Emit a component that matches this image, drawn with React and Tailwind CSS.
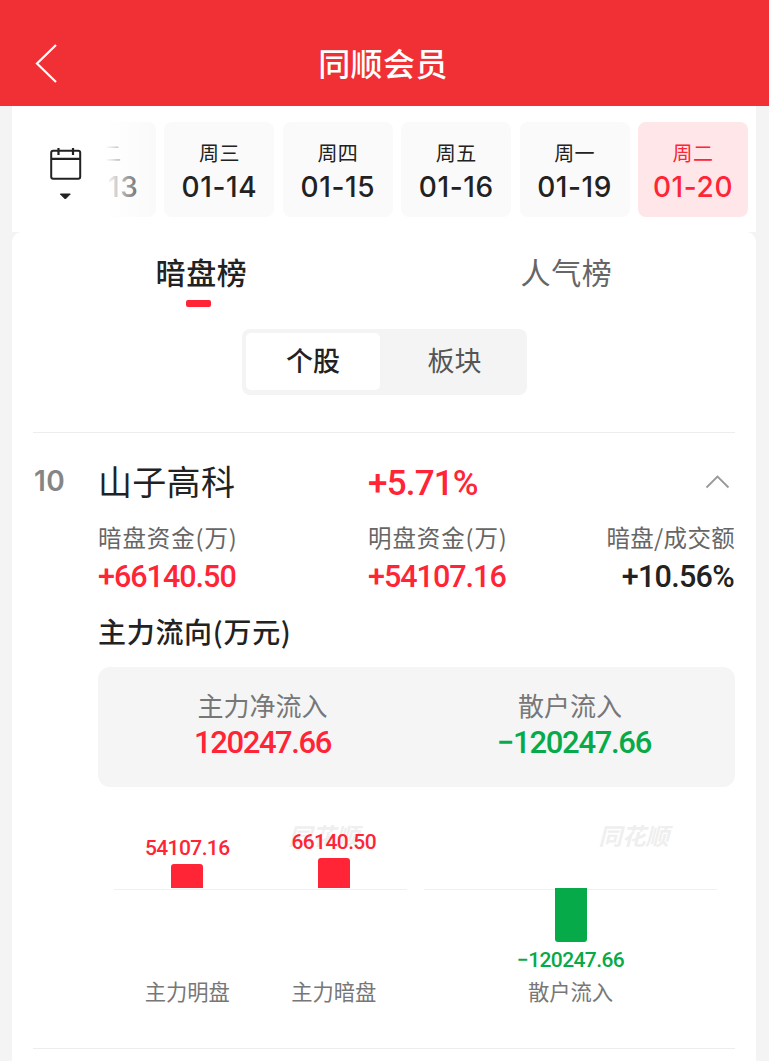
import clsx from "clsx";

const dates = [
  { week: "周二", day: "01-13" },
  { week: "周三", day: "01-14" },
  { week: "周四", day: "01-15" },
  { week: "周五", day: "01-16" },
  { week: "周一", day: "01-19" },
  { week: "周二", day: "01-20", active: true },
];

const mainBars = [
  { label: "主力明盘", value: "54107.16", height: 24 },
  { label: "主力暗盘", value: "66140.50", height: 30 },
];

const CalendarIcon = () => (
  <svg width="32" height="54" viewBox="0 0 32 54" fill="none">
    <rect x="1.2" y="3.8" width="29" height="28" rx="2" stroke="#222" strokeWidth="2" />
    <path d="M1 11.8H30M8.5 1V8M23 1V8" stroke="#222" strokeWidth="2.2" />
    <path d="M10.3 47H20.3L15.3 52Z" fill="#222" stroke="#222" strokeLinejoin="round" />
  </svg>
);

const DateCard = ({ week, day, active }) => (
  <div
    className={clsx(
      "flex h-[95px] w-[110px] shrink-0 flex-col items-center rounded-lg pt-[19px]",
      active ? "bg-[#ffe7e9] text-[#ff2436]" : "bg-[#fafafa] text-[#222]"
    )}
  >
    <span className="h-6 text-[20px] leading-6 tracking-[0.4px]">{week}</span>
    <span className="mt-1.5 h-8 font-[Inter] text-[28px] leading-8 font-medium tracking-[0.6px]">
      {day}
    </span>
  </div>
);

const Metric = ({ label, value, className, labelClassName, valueClassName }) => (
  <div className={clsx("flex flex-col", className)}>
    <span
      className={clsx(
        "h-8 text-[23.5px] leading-8 whitespace-nowrap text-[#666]",
        labelClassName
      )}
    >
      {label}
    </span>
    <span
      className={clsx(
        "mt-2 h-8 font-[Roboto] text-[30.5px] leading-8 font-medium",
        valueClassName
      )}
    >
      {value}
    </span>
  </div>
);

const Watermark = () => (
  <span className="absolute top-[34px] right-[48px] h-7 text-[23.5px] leading-7 font-bold text-[#efefef] italic">
    同花顺
  </span>
);

const App = () => {
  return (
    <div className="min-h-[1061px] bg-[#f4f4f4] font-['Noto_Sans_CJK_SC',sans-serif] text-[#222]">
      <header className="grid h-[106px] grid-cols-[1fr_auto_1fr] items-center bg-[#f03035] pt-[17px] text-white">
        <svg className="mt-1 ml-[35px]" width="24" height="40" viewBox="0 0 24 40" fill="none">
          <path d="M21 1L2 19.5L21 38" stroke="currentColor" strokeWidth="2.2" />
        </svg>
        <h1 className="-ml-[3px] text-[32px] leading-10 font-medium tracking-[0.4px]">
          同顺会员
        </h1>
        <span />
      </header>

      <main className="mr-[13px] ml-3 h-[955px]">
        <section className="flex h-[126px] bg-white">
          <div className="w-[88px] shrink-0 pt-[41px] pl-[38px]">
            <CalendarIcon />
          </div>
          <div className="relative flex flex-1 justify-end gap-[8.4px] overflow-hidden pt-4 pr-2">
            {dates.map((date) => (
              <DateCard key={date.day} {...date} />
            ))}
            <div className="absolute top-0 left-0 h-full w-14 bg-linear-to-r from-white from-10% to-white/0" />
          </div>
        </section>

        <section className="h-[829px] rounded-t-[10px] bg-white">
          <div className="flex h-20 pt-[19px] text-[30px] leading-10 tracking-[0.7px]">
            <div className="flex w-[379px] flex-col items-center font-medium">
              <span>暗盘榜</span>
              <span className="mt-[9px] mr-1.5 h-[7px] w-[25px] rounded-[2px] bg-[#ff2436]" />
            </div>
            <div className="w-[351px] text-center text-[#666]">人气榜</div>
          </div>

          <div className="mt-[17px] ml-[230px] flex h-[66px] w-[285px] rounded-lg bg-[#f4f4f4] p-1 text-center text-[27px] leading-[54px]">
            <div className="h-[57px] w-[134px] rounded-[5px] bg-white font-medium">个股</div>
            <div className="flex-1 pl-1.5 text-[#555]">板块</div>
          </div>

          <article className="mt-[37px] mr-[21px] ml-[21px] h-[617px] border-y border-[#ededed] pl-[65px]">
            <div className="relative flex h-[94px] items-center">
              <span className="absolute left-[-64px] pt-px font-[Inter] text-[28px] font-semibold tracking-[0.5px] text-[#858585]">
                10
              </span>
              <span className="w-[270px] text-[34px] tracking-[0.3px]">山子高科</span>
              <span className="pt-2 font-[Roboto] text-[35px] font-medium tracking-[-0.8px] text-[#ff2436]">
                +5.71%
              </span>
              <svg
                className="mt-0.5 mr-[5px] ml-auto"
                width="25"
                height="15"
                viewBox="0 0 25 15"
                fill="none"
              >
                <path d="M1.5 13.5L12.5 2.5L23.5 13.5" stroke="#999" strokeWidth="1.8" />
              </svg>
            </div>

            <div className="-mt-[6px] flex">
              <Metric
                className="w-[270px]"
                label="暗盘资金(万)"
                value="+66140.50"
                labelClassName="tracking-[0.9px]"
                valueClassName="tracking-[-1px] text-[#ff2436]"
              />
              <Metric
                label="明盘资金(万)"
                value="+54107.16"
                labelClassName="tracking-[0.9px]"
                valueClassName="tracking-[-1px] text-[#ff2436]"
              />
              <Metric
                className="ml-auto items-end"
                label="暗盘/成交额"
                value="+10.56%"
                labelClassName="tracking-[0.3px]"
                valueClassName="mr-px tracking-[-0.7px]"
              />
            </div>

            <h2 className="mt-[18px] h-10 text-[28px] leading-10 font-medium tracking-[0.7px]">
              主力流向(万元)
            </h2>

            <div className="mt-[16px] flex h-[120px] rounded-[12px] bg-[#f5f5f5] pt-[22px] text-center">
              <div className="w-[329px]">
                <div className="h-8 text-[26px] leading-8 text-[#777]">主力净流入</div>
                <div className="mt-[6px] h-8 font-[Roboto] text-[31px] leading-8 font-medium tracking-[-1.4px] text-[#ff2436]">
                  120247.66
                </div>
              </div>
              <div className="w-[286px]">
                <div className="h-8 text-[26px] leading-8 text-[#777]">散户流入</div>
                <div className="mt-[6px] ml-2 h-8 font-[Roboto] text-[31px] leading-8 font-medium tracking-[-1.3px] text-[#07aa48]">
                  −120247.66
                </div>
              </div>
            </div>

            <div className="ml-4 flex gap-[17px] text-[21.3px] leading-6 text-[#777]">
              <div className="relative flex w-[293px]">
                <Watermark />
                {mainBars.map((bar) => (
                  <div key={bar.label} className="relative flex flex-1 flex-col items-center">
                    <div className="flex h-[102px] flex-col items-center justify-end pb-px">
                      <span className="mb-1 h-6 font-[Roboto] text-[21px] font-medium tracking-[-0.6px] text-[#ff2436]">
                        {bar.value}
                      </span>
                      <div
                        className="w-8 rounded-t-[3px] bg-[#ff2436]"
                        style={{ height: bar.height }}
                      />
                    </div>
                    <div className="h-[90px] w-full border-t border-[#f0f0f0]" />
                    <span className="h-6">{bar.label}</span>
                  </div>
                ))}
              </div>

              <div className="relative flex w-[293px] flex-col items-center pt-[102px]">
                <Watermark />
                <div className="flex h-[90px] w-full flex-col items-center border-t border-[#f0f0f0]">
                  <div className="-mt-0.5 h-[54px] w-8 shrink-0 rounded-b-[3px] bg-[#07aa48]" />
                  <span className="mt-[6px] h-6 font-[Roboto] text-[21px] font-medium tracking-[-0.6px] text-[#07aa48]">
                    −120247.66
                  </span>
                </div>
                <span className="h-6">散户流入</span>
              </div>
            </div>
          </article>
        </section>
      </main>
    </div>
  );
};

export default App;
